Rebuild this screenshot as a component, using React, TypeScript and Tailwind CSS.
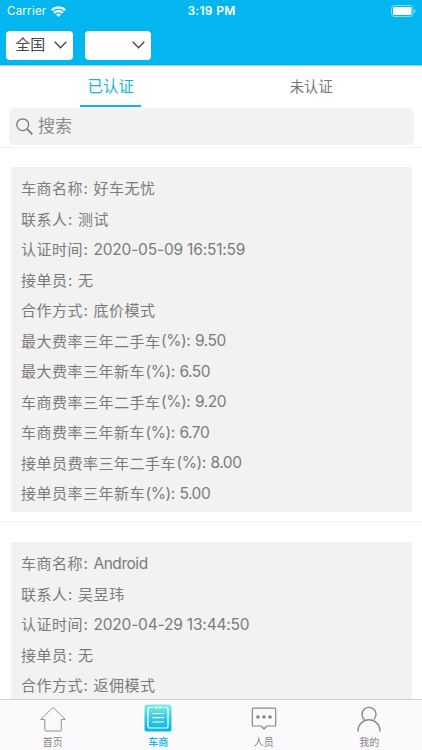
import type { ReactNode } from 'react'

type Row = { name: string; percent?: boolean; value: string }

const first: Row[] = [
  { name: '车商名称', value: '好车无忧' },
  { name: '联系人', value: '测试' },
  { name: '认证时间', value: '2020-05-09 16:51:59' },
  { name: '接单员', value: '无' },
  { name: '合作方式', value: '底价模式' },
  { name: '最大费率三年二手车', percent: true, value: '9.50' },
  { name: '最大费率三年新车', percent: true, value: '6.50' },
  { name: '车商费率三年二手车', percent: true, value: '9.20' },
  { name: '车商费率三年新车', percent: true, value: '6.70' },
  { name: '接单员费率三年二手车', percent: true, value: '8.00' },
  { name: '接单员率三年新车', percent: true, value: '5.00' },
]

const second: Row[] = [
  { name: '车商名称', value: 'Android' },
  { name: '联系人', value: '吴昱玮' },
  { name: '认证时间', value: '2020-04-29 13:44:50' },
  { name: '接单员', value: '无' },
  { name: '合作方式', value: '返佣模式' },
]

function valueStyle(value: string) {
  if (/[\u4e00-\u9fff]/.test(value)) return 'tracking-[0.5px]'
  if (value.length > 10) return 'pb-[1.5px] text-[15.5px] tracking-[-0.18px]'
  return 'pb-[1.5px] text-[15.5px] tracking-[-0.45px]'
}

function Card({ rows }: { rows: Row[] }) {
  return (
    <section className="mr-[10.5px] ml-[10.6px] bg-[#f2f2f2] pt-[6.7px] pb-[2.8px] pl-[10.3px] text-[15px] text-[#7b7b7b]">
      {rows.map((r) => (
        <div key={r.name} className="flex h-[30.5px] items-center whitespace-nowrap">
          <span className="tracking-[0.5px]">{r.name}</span>
          <span className={r.percent ? 'w-[34.5px] pb-[1.5px] pl-[0.5px] text-[15.5px] tracking-[-0.4px]' : 'w-[10.5px] pl-[0.5px]'}>
            {r.percent ? '(%):' : ':'}
          </span>
          <span className={valueStyle(r.value)}>{r.value}</span>
        </div>
      ))}
    </section>
  )
}

function Select({ label }: { label?: string }) {
  return (
    <div className="flex h-[28.5px] w-[66.5px] items-center justify-between rounded-[4px] bg-white pr-[6px] pl-[9px] text-[15px] text-[#484848]">
      <span>{label}</span>
      <svg width="13" height="8" viewBox="0 0 13 8" fill="none" stroke="#444" strokeWidth="1.3">
        <path d="M.7.8 6.5 6.7 12.3.8" />
      </svg>
    </div>
  )
}

function Tab({ label, active, children }: { label: string; active?: boolean; children: ReactNode }) {
  return (
    <div className={`flex flex-1 flex-col items-center ${active ? 'text-[#12b1e8]' : 'text-[#858585]'}`}>
      <div className="flex h-[32px] items-end">{children}</div>
      <span className={`mt-[3px] text-[10px] leading-[14px] ${active ? 'font-medium' : ''}`}>{label}</span>
    </div>
  )
}

export default function App() {
  return (
    <div className="flex h-[750px] w-[422px] flex-col overflow-hidden bg-white font-[Inter,'Noto_Sans_CJK_SC',sans-serif]">
      <header className="h-[66px] shrink-0 border-b border-[#7edcf8] bg-[#03b6f0] text-white">
        <div className="grid h-[22px] grid-cols-3 items-center pr-[6px] pl-[7px] text-[11.5px]">
          <div className="flex items-center gap-[5px]">
            <span className="pt-[2px] tracking-[0.25px]">Carrier</span>
            <svg width="15" height="11" viewBox="0 0 15 11" fill="none" stroke="white" strokeWidth="2.3">
              <path d="M.8 4.2a9.6 9.6 0 0 1 13.4 0M3.1 6.9a6.3 6.3 0 0 1 8.8 0" />
              <path d="M7.5 11 5 8.6a3.6 3.6 0 0 1 5 0Z" fill="white" stroke="none" />
            </svg>
          </div>
          <span className="pb-px text-center text-[12px] font-semibold tracking-[0.3px]">3:19 PM</span>
          <svg className="justify-self-end" width="25" height="12" viewBox="0 0 25 12">
            <rect x=".5" y=".5" width="21.5" height="11" rx="3" fill="none" stroke="white" strokeOpacity=".5" />
            <rect x="2" y="2" width="18.5" height="8" rx="1.5" fill="white" />
            <path d="M23.3 4a2.2 2.2 0 0 1 0 4Z" fill="white" fillOpacity=".6" />
          </svg>
        </div>
        <div className="flex gap-[12px] pt-[9px] pl-[6.3px]">
          <Select label="全国" />
          <Select />
        </div>
      </header>

      <nav className="grid h-[40px] shrink-0 grid-cols-2 justify-items-center px-[10.5px]">
        <span className="w-[61px] border-b-2 border-[#16b2e3] pt-[2px] text-center text-[15.5px] leading-[36px] text-[#16b2e3]"><span className="inline-block pt-px">已认证</span></span>
        <span className="w-[61px] text-center text-[14.3px] leading-[41px] text-[#777]">未认证</span>
      </nav>

      <div className="h-[42px] shrink-0 border-b border-[#f3f3f3] px-[8.5px] pt-[2px]">
        <div className="flex h-[37px] items-center rounded-[6px] bg-[#f2f2f2] pl-[7.5px] text-[17px] text-[#8b8b8f]">
          <svg className="mr-[5px]" width="17" height="17" viewBox="0 0 17 17" fill="none" stroke="#77777b" strokeWidth="1.3">
            <circle cx="6.7" cy="6.7" r="5.9" />
            <path d="m11 11 5.3 5.3" strokeWidth="1.7" />
          </svg>
          <span className="pt-px">搜索</span>
        </div>
      </div>

      <main className="min-h-0 flex-1 overflow-hidden pt-[19.4px]">
        <Card rows={first} />
        <div className="mt-[9px] mb-[20px] h-px bg-[#f1f1f1]" />
        <Card rows={second} />
      </main>

      <footer className="flex h-[51px] shrink-0 border-t border-[#d2d0d2] bg-[#fbf9fb]">
        <Tab label="首页">
          <svg width="26" height="27" viewBox="0 0 26 27" fill="none" stroke="#929292" strokeWidth="1" strokeLinejoin="round">
            <path d="M13 2.3.8 14.5h4v10.5q0 1 1 1h14.5q1 0 1-1V14.5h4Z" />
          </svg>
        </Tab>
        <Tab label="车商" active>
          <svg width="28" height="28" viewBox="0 0 28 28" fill="none" stroke="white" strokeLinecap="round">
            <defs>
              <linearGradient id="board" x1="0" y1="0" x2="0" y2="1">
                <stop stopColor="#80efdc" />
                <stop offset=".5" stopColor="#31cbe2" />
                <stop offset="1" stopColor="#06b4ed" />
              </linearGradient>
            </defs>
            <rect x=".5" y=".5" width="27" height="27" rx="2" fill="url(#board)" stroke="none" />
            <path d="M8.5 3.5H6Q4 3.5 4 5.5V22q0 2 2 2h16q2 0 2-2V5.5q0-2-2-2h-2.5" strokeWidth="1.2" />
            <path d="M11.5 3.5h1.3M15.5 3.5h1.3" strokeWidth="2" />
            <path d="M9 9.5h10.5M9 13.7h10.5M9 18h10.5" strokeWidth="1.2" />
          </svg>
        </Tab>
        <Tab label="人员">
          <svg width="26" height="25" viewBox="0 0 26 25" fill="none" stroke="#8b878b" strokeWidth="1.2" strokeLinejoin="round">
            <path d="M2.3 1.2h21.4q1 0 1 1V18q0 1-1 1h-8L13 22l-2.7-3h-8q-1 0-1-1V2.2q0-1 1-1Z" />
            <g fill="#858185" stroke="none">
              <circle cx="7" cy="10" r="1.8" />
              <circle cx="13" cy="10" r="1.8" />
              <circle cx="19" cy="10" r="1.8" />
            </g>
          </svg>
        </Tab>
        <Tab label="我的">
          <svg width="24" height="26" viewBox="0 0 24 26" fill="none" stroke="#8b878b" strokeWidth="1.4">
            <path d="M7.6 13.8a7 7 0 1 1 9.2-.4" />
            <path d="M1 25.5v-.7a11 11 0 0 1 22 0v.7" />
          </svg>
        </Tab>
      </footer>
    </div>
  )
}
